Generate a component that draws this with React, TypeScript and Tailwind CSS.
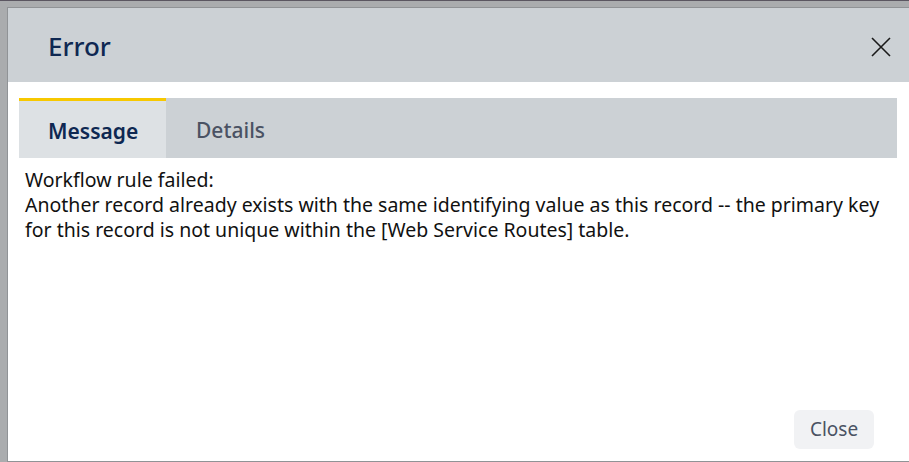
import React from 'react';

const App: React.FC = () => {
  return (
    <div
      className="w-[909px] h-[462px] overflow-hidden bg-[#aaacae] border-t border-[#5b5661] pt-[6px] pl-[7px]"
      style={{ fontFamily: '"Noto Sans", "Open Sans", sans-serif' }}
    >
      <div className="h-[455px] flex flex-col bg-white border-l border-t border-b border-[#909396]">
        {/* Header */}
        <div className="h-[74px] shrink-0 bg-[#ccd1d5] flex items-center justify-between pl-[40px] pr-[16px] pt-[3px]">
          <h1 className="text-[26px] font-medium text-[#0e2852]">Error</h1>
          <button className="w-[24px] h-[24px] flex items-center justify-center text-[#1a1a1a]">
            <svg width="20" height="20" viewBox="0 0 20 20" fill="none" stroke="currentColor" strokeWidth="1.6">
              <path d="M1 1 L19 19 M19 1 L1 19" />
            </svg>
          </button>
        </div>

        {/* Body */}
        <div className="flex-1 flex flex-col pl-[11px] pr-[12px] pt-[16px] pb-[12px]">
          <div className="flex h-[60px] bg-[#ccd1d5]">
            <div className="w-[147px] bg-[#dde1e4] border-t-[3px] border-[#f7c800] flex items-center pt-[4px] px-[29px] text-[21px] font-semibold text-[#0e2852]">
              Message
            </div>
            <div className="flex items-center pt-[6px] px-[30px] text-[21px] font-medium text-[#4a5263]">
              Details
            </div>
          </div>

          <div className="pl-[6px] pt-[9px] text-[19.5px] leading-[25px] text-[#111111]">
            <p>Workflow rule failed:</p>
            <p>
              Another record already exists with the same identifying value as this record -- the primary key for this
              record is not unique within the [Web Service Routes] table.
            </p>
          </div>

          <div className="mt-auto flex justify-end pr-[23px]">
            <button className="w-[80px] h-[39px] rounded-[6px] bg-[#f1f2f4] text-[19px] text-[#4a5263]">
              Close
            </button>
          </div>
        </div>
      </div>
    </div>
  );
};

export default App;
